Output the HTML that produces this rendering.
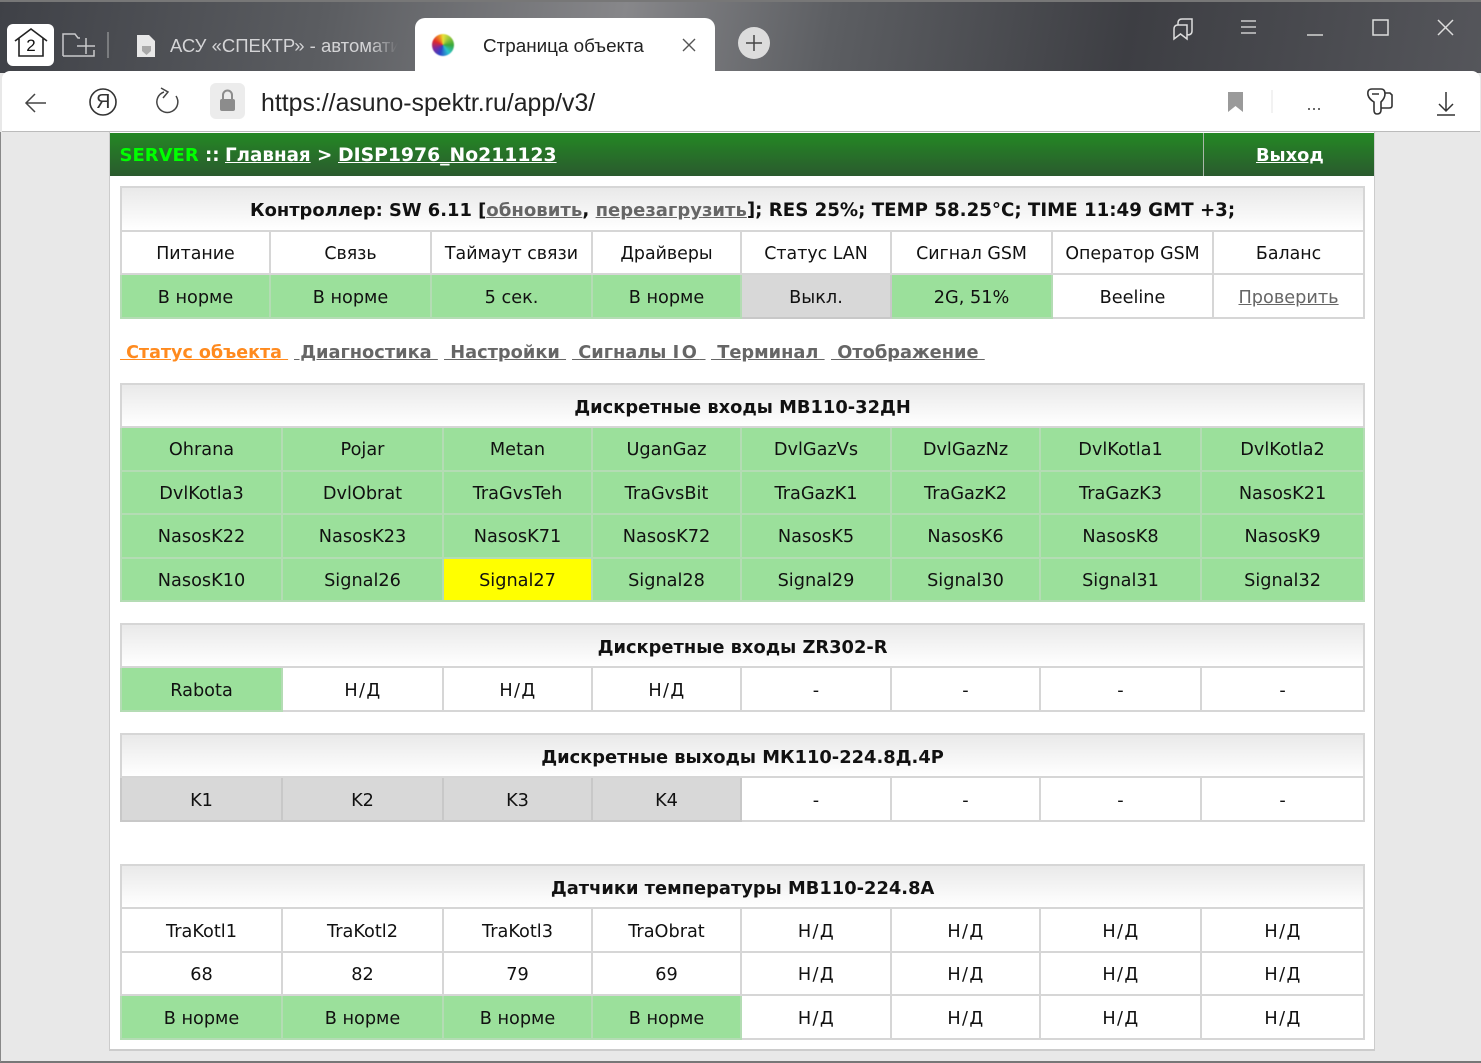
<!DOCTYPE html>
<html><head><meta charset="utf-8"><title>Страница объекта</title>
<style>
html,body{margin:0;padding:0;width:1481px;height:1063px;overflow:hidden;background:#e8e8e8}
body{position:relative;font-family:"DejaVu Sans","Liberation Sans",sans-serif;color:#111;filter:blur(.35px)}
.a{position:absolute}
#bar{left:0;top:0;width:1481px;height:73px;background:linear-gradient(100deg,#3f4147 0,#5b5d61 22%,#87878a 42%,#5c5e62 56%,#3d3e43 76%,#55565b 100%);border-top:2px solid #777;box-sizing:border-box}
#tool{left:2px;top:71px;width:1478px;height:61px;background:#fff;border-radius:8px 8px 0 0;border-bottom:1px solid #bbb;box-sizing:border-box}
#tab{left:415px;top:18px;width:300px;height:54px;background:#fff;border-radius:10px 10px 0 0}
.b{font-family:"Liberation Sans",sans-serif;white-space:nowrap}
#page{left:109px;top:132px;width:1266px;height:919px;background:#fff;border:solid #ccc;border-width:0 1px 2px 1px;box-sizing:border-box}
#hdr{left:110px;top:133px;width:1264px;height:43px;background:linear-gradient(#248824,#2a5a2e);color:#fff;font-weight:bold;font-size:18.3px;line-height:45px;white-space:nowrap}
#hdr a{color:#fff;text-decoration:underline}
#hdr i{position:absolute;left:1093px;top:0;width:1px;height:43px;background:#a9b8a9}
table{position:absolute;left:120px;width:1243px;border-collapse:collapse;table-layout:fixed;font-size:17.7px;text-align:center}
td{border:2px solid #d6d6d6;padding:2px 0 0;height:39px;white-space:nowrap;overflow:hidden}
tr.h42 td{height:39px;padding-top:3px}
tr.g.h42 td{height:40px;padding-top:2px}
th{border:2px solid #d6d6d6;padding:3px 0 0;height:38px;font-size:17.85px;font-weight:bold;background:linear-gradient(#e9e9e9,#fff);white-space:nowrap}
.g{background:#9be09b}.y{background:#ff0}.s{background:#d8d8d8}
tr.g td,td.g{border-color:#b4dcb4}
td.s{border-color:#c8c8c8}
td a,th a{color:#666;text-decoration:underline}
td.n{letter-spacing:1.4px;padding-left:1px}
#nav{left:120px;top:340px;font-size:17.8px;font-weight:bold;line-height:26px;white-space:pre}
#nav a{color:#666;text-decoration:underline;position:absolute;top:0}
svg{position:absolute;overflow:visible}
</style></head><body>

<div class="a" id="bar"></div>
<div class="a" id="tool"></div>
<div class="a" id="tab"></div>

<div class="a" style="left:7px;top:24px;width:47px;height:42px;background:#fff;border-radius:6px"></div>
<svg style="left:0;top:0" width="1481" height="132" fill="none">
<path d="M15 41 L31 29 L47 41 M19 38 V56 H43 V38" stroke="#222" stroke-width="1.6"/>
<path d="M63 56 V34 H75 L78 38 H80 M94 50 V56 H63 M77 46 H95 M86 38 V54" stroke="#c9c9cb" stroke-width="1.5"/>
<path d="M108 32 V58" stroke="#8b8c8f" stroke-width="1.5"/>
<path d="M137 35 H149 L155 41 V57 H137 Z" fill="#e8e8e8"/><path d="M142 46 H151 V51 L146.500 55 L142 51 Z" fill="#a9a9a9"/>
<path d="M683 39 L695 51 M695 39 L683 51" stroke="#555" stroke-width="1.4"/>
<circle cx="754" cy="43" r="16" fill="#dcdcdc"/><path d="M746 43 H762 M754 35 V51" stroke="#444" stroke-width="1.5"/>
<path d="M1174 38 V30 Q1174 26 1178 26 H1187 V40 L1180.500 35 L1174 40 Z M1178 26 V24 Q1178 20 1182 20 H1192 V32 Q1192 36 1187 36" stroke="#ddd" stroke-width="1.5" transform="translate(0 -1)"/>
<path d="M1241 21 H1256 M1241 27 H1256 M1241 33 H1256" stroke="#ccc" stroke-width="1.5"/>
<path d="M1307 35 H1323" stroke="#ccc" stroke-width="1.6"/>
<path d="M1373 20 H1388 V35 H1373 Z" stroke="#ddd" stroke-width="1.5"/>
<path d="M1438 20 L1453 35 M1453 20 L1438 35" stroke="#ddd" stroke-width="1.5"/>
<path d="M46 103 H27 M35 94 L26 103 L35 112" stroke="#444" stroke-width="1.5"/>
<circle cx="103" cy="102" r="13" stroke="#333" stroke-width="1.6"/>
<path d="M176 96 A10.500 10.500 0 1 1 164 92 M161 88 L168 92 L163 98" stroke="#444" stroke-width="1.5" />
<rect x="210" y="83" width="35" height="36" rx="6" fill="#ececec"/>
<rect x="220" y="99" width="15" height="12" rx="2" fill="#8c8c8c"/><path d="M223 99 V95 A4.500 4.500 0 0 1 232 95 V99" stroke="#8c8c8c" stroke-width="2"/>
<path d="M1228 92 H1243 V112 L1235.500 106 L1228 112 Z" fill="#9a9a9a"/>
<path d="M1272 90 V113" stroke="#e4e4e4" stroke-width="1"/>
<path d="M1308 109 h2 M1313 109 h2 M1318 109 h2" stroke="#555" stroke-width="1.800"/>
<path d="M1368 95 Q1367 89 1372 89 H1381 Q1385 89 1385 94 Q1385 98 1381 102 V110 Q1381 114 1377 114 Q1374 114 1374 110 V102 Q1369 99 1368 95 Z M1372 94 H1379 M1385 93 H1390 L1392 95 V106 Q1392 108 1389 108 H1381" stroke="#333" stroke-width="1.600"/>
<path d="M1446 92 V111 M1439 104 L1446 111 L1453 104 M1437 115 H1455" stroke="#333" stroke-width="1.500"/>
</svg>
<div class="a" style="left:432px;top:34px;width:22px;height:22px;border-radius:50%;background:conic-gradient(#e9e23a,#39a83a 25%,#2ac4d0 40%,#2a46c8 55%,#7a2aa0 68%,#e02a2a 82%,#f09a20 95%,#e9e23a);filter:blur(.6px)"></div>
<div class="a b" style="left:23px;top:36px;width:16px;text-align:center;font-size:17px;line-height:20px;color:#111">2</div>
<div class="a b" style="left:170px;top:35px;width:228px;overflow:hidden;font-size:18.500px;line-height:22px;color:#d4d4d6;-webkit-mask-image:linear-gradient(90deg,#000 88%,transparent)">АСУ «СПЕКТР» - автоматизация</div>
<div class="a b" style="left:483px;top:35px;font-size:18.850px;line-height:22px;color:#222">Страница объекта</div>
<div class="a b" style="left:96px;top:92px;width:14px;text-align:center;font-size:20px;line-height:20px;color:#333">Я</div>
<div class="a b" style="left:261px;top:89px;font-size:24.850px;line-height:30px;color:#222">https://asuno-spektr.ru/app/v3/</div>

<div class="a" id="page"></div>
<div class="a" style="left:0;top:1061px;width:1481px;height:2px;background:#777"></div>
<div class="a" style="left:0;top:132px;width:1px;height:930px;background:#888"></div>

<div class="a" id="hdr"><span style="position:absolute;left:9.500px;color:#0f0;font-size:18px">SERVER</span><span style="position:absolute;left:95px">::</span><a style="position:absolute;left:115px">Главная</a><span style="position:absolute;left:207px">&gt;</span><a style="position:absolute;left:228px;font-size:18.800px">DISP1976_No211123</a><i></i><a style="position:absolute;left:1146px;font-size:17.800px">Выход</a></div>

<table style="top:186px">
<colgroup><col style="width:149px"><col style="width:161px"><col style="width:161px"><col style="width:149px"><col style="width:150px"><col style="width:161px"><col style="width:161px"><col style="width:151px"></colgroup>
<tr><th colspan="8" style="height:39px;font-size:18.200px"><span style="font-size:17.870px">Контроллер: SW 6.11 [</span><a style="font-size:18.100px">обновить</a>, <a style="font-size:18px">перезагрузить</a>]; RES 25%; TEMP 58.25°C; TIME 11:49 GMT +3;</th></tr>
<tr style="font-size:17.400px"><td>Питание</td><td>Связь</td><td>Таймаут связи</td><td>Драйверы</td><td>Статус LAN</td><td>Сигнал GSM</td><td>Оператор GSM</td><td>Баланс</td></tr>
<tr class="h42"><td class="g">В норме</td><td class="g">В норме</td><td class="g">5 сек.</td><td class="g">В норме</td><td class="s">Выкл.</td><td class="g">2G, 51%</td><td>Beeline</td><td><a>Проверить</a></td></tr>
</table>

<div class="a" id="nav"><a style="left:0;color:#ff8a1e;font-size:17.500px"> Статус объекта </a><a style="left:174px"> Диагностика </a><a style="left:324px"> Настройки </a><a style="left:452px"> Сигналы <span style="letter-spacing:2.500px">IO</span> </a><a style="left:591px"> Терминал </a><a style="left:711px"> Отображение </a></div>

<table style="top:383px">
<colgroup><col style="width:161px"><col style="width:161px"><col style="width:149px"><col style="width:149px"><col style="width:150px"><col style="width:149px"><col style="width:161px"><col style="width:163px"></colgroup>
<tr><th colspan="8">Дискретные входы МВ110-32ДН</th></tr>
<tr class="g h42"><td>Ohrana</td><td>Pojar</td><td>Metan</td><td>UganGaz</td><td>DvlGazVs</td><td>DvlGazNz</td><td>DvlKotla1</td><td>DvlKotla2</td></tr>
<tr class="g"><td>DvlKotla3</td><td>DvlObrat</td><td>TraGvsTeh</td><td>TraGvsBit</td><td>TraGazK1</td><td>TraGazK2</td><td>TraGazK3</td><td>NasosK21</td></tr>
<tr class="g h42"><td>NasosK22</td><td>NasosK23</td><td>NasosK71</td><td>NasosK72</td><td>NasosK5</td><td>NasosK6</td><td>NasosK8</td><td>NasosK9</td></tr>
<tr class="g"><td>NasosK10</td><td>Signal26</td><td class="y">Signal27</td><td>Signal28</td><td>Signal29</td><td>Signal30</td><td>Signal31</td><td>Signal32</td></tr>
</table>

<table style="top:623px">
<colgroup><col style="width:161px"><col style="width:161px"><col style="width:149px"><col style="width:149px"><col style="width:150px"><col style="width:149px"><col style="width:161px"><col style="width:163px"></colgroup>
<tr><th colspan="8">Дискретные входы ZR302-R</th></tr>
<tr class="h42"><td class="g">Rabota</td><td class="n">Н/Д</td><td class="n">Н/Д</td><td class="n">Н/Д</td><td>-</td><td>-</td><td>-</td><td>-</td></tr>
</table>

<table style="top:733px">
<colgroup><col style="width:161px"><col style="width:161px"><col style="width:149px"><col style="width:149px"><col style="width:150px"><col style="width:149px"><col style="width:161px"><col style="width:163px"></colgroup>
<tr><th colspan="8">Дискретные выходы МК110-224.8Д.4Р</th></tr>
<tr class="h42"><td class="s">K1</td><td class="s">K2</td><td class="s">K3</td><td class="s">K4</td><td>-</td><td>-</td><td>-</td><td>-</td></tr>
</table>

<table style="top:864px">
<colgroup><col style="width:161px"><col style="width:161px"><col style="width:149px"><col style="width:149px"><col style="width:150px"><col style="width:149px"><col style="width:161px"><col style="width:163px"></colgroup>
<tr><th colspan="8">Датчики температуры МВ110-224.8А</th></tr>
<tr class="h42"><td>TraKotl1</td><td>TraKotl2</td><td>TraKotl3</td><td>TraObrat</td><td class="n">Н/Д</td><td class="n">Н/Д</td><td class="n">Н/Д</td><td class="n">Н/Д</td></tr>
<tr><td>68</td><td>82</td><td>79</td><td>69</td><td class="n">Н/Д</td><td class="n">Н/Д</td><td class="n">Н/Д</td><td class="n">Н/Д</td></tr>
<tr class="h42"><td class="g">В норме</td><td class="g">В норме</td><td class="g">В норме</td><td class="g">В норме</td><td class="n">Н/Д</td><td class="n">Н/Д</td><td class="n">Н/Д</td><td class="n">Н/Д</td></tr>
</table>

</body></html>
